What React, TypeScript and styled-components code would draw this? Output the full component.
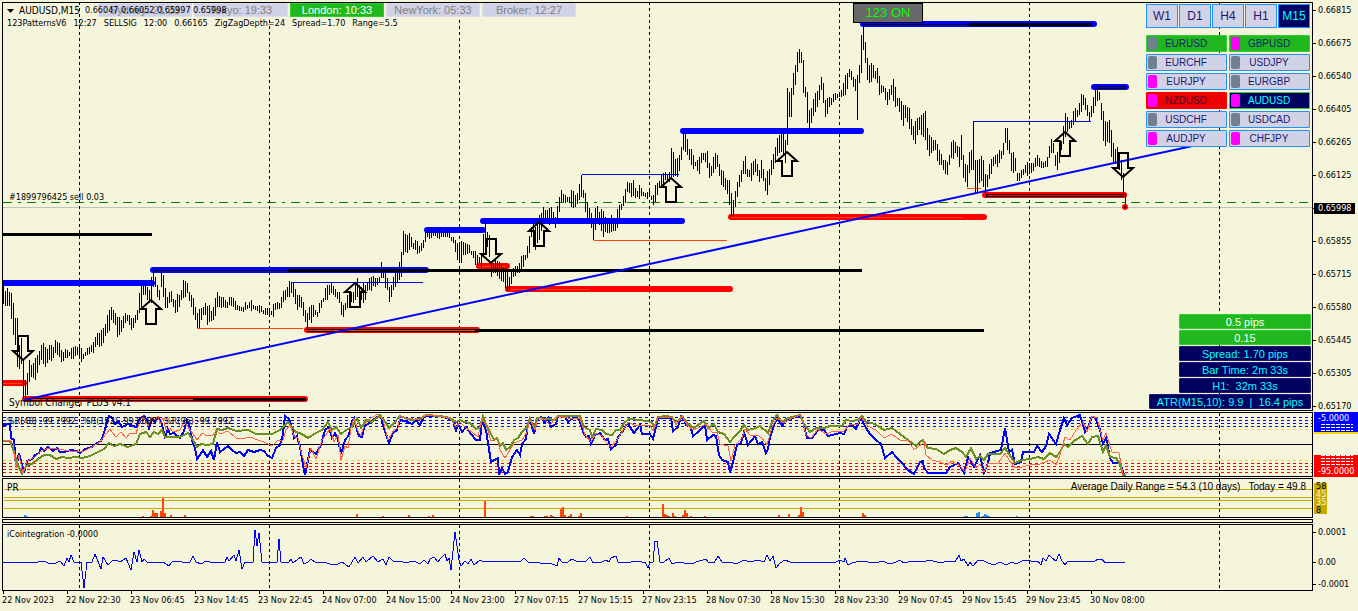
import React from "react";
import styled, { createGlobalStyle } from "styled-components";

const BEIGE = "#f5f5dc";
const UI = '"DejaVu Sans Condensed", "DejaVu Sans", sans-serif';
const ARIAL = '"Liberation Sans", Arial, sans-serif';

const Global = createGlobalStyle`
  * { box-sizing: border-box; }
  body { margin: 0; background: ${BEIGE}; color: #000; font: 10px/13px ${UI}; }
`;

const Page = styled.main`
  display: flex;
  flex-direction: column;
  gap: 1px;
  padding: 2px 0 0 2px;
  overflow: hidden;
`;
const Panel = styled.section`
  display: grid;
  grid-template-columns: minmax(0, 1fr) 45px;
`;
const Plot = styled.div<{ $h: number }>`
  display: grid;
  grid-template: minmax(0, 1fr) / minmax(0, 1fr);
  height: ${(p) => p.$h}px;
  border: 1px solid #000;
  > * { grid-area: 1 / 1; }
`;
const Divider = styled.div`
  height: 4px;
  margin-right: 45px;
  border: 1px solid #000;
`;
const Canvas = styled.svg`
  display: block;
  width: 100%;
  height: 100%;
  overflow: hidden;
`;
const Note = styled.span<{ $x?: number; $y?: number; $arial?: boolean; $end?: boolean }>`
  z-index: 1;
  align-self: start;
  justify-self: ${(p) => (p.$end ? "end" : "start")};
  margin: ${(p) => p.$y ?? 0}px ${(p) => (p.$end ? 6 : 0)}px 0 ${(p) => p.$x ?? 4}px;
  white-space: pre;
  font-family: ${(p) => (p.$arial ? ARIAL : UI)};
`;
const Title = styled(Note)`
  display: flex;
  align-items: center;
  gap: 5px;
`;
const Values = styled(Note)`
  display: flex;
  gap: 7px;
  font-size: 9px;
`;
const Small = styled.span`
  font-size: 9px;
`;

const Sessions = styled.div`
  display: flex;
  gap: 2px;
  align-self: start;
  margin-left: 95px;
`;
const Session = styled.div<{ $open?: boolean }>`
  width: 94px;
  height: 14px;
  border: 1px solid ${(p) => (p.$open ? "#32cd32" : "#dcdcee")};
  background: ${(p) => (p.$open ? "#1fb91f" : "#d2d2e6")};
  color: ${(p) => (p.$open ? "#fff" : "#808080")};
  font: 11px/12px ${ARIAL};
  text-align: center;
`;
const Toggle = styled.button`
  align-self: start;
  width: 70px;
  height: 20px;
  margin-left: 850px;
  padding: 0;
  border: 1px solid #000;
  background: #696969;
  color: #0f0;
  font: 13px/18px ${ARIAL};
`;

const Controls = styled.div`
  display: flex;
  flex-direction: column;
  gap: 7px;
  align-self: start;
  justify-self: end;
  margin: 1px 2px 0 0;
`;
const Frames = styled.div`
  display: grid;
  grid-template-columns: repeat(5, 32px);
  gap: 1px;
`;
const FrameButton = styled.button<{ $on?: boolean }>`
  height: 24px;
  padding: 0;
  border: 1px solid #1e90ff;
  background: ${(p) => (p.$on ? "#000060" : "#d2d2e6")};
  color: ${(p) => (p.$on ? "#0ff" : "#191970")};
  font: 12px/22px ${ARIAL};
`;
const Symbols = styled.div`
  display: grid;
  grid-template-columns: 81px 81px;
  gap: 2px;
`;
type Tone = "plain" | "up" | "down" | "on";
const tones: Record<Tone, [string, string, string]> = {
  plain: ["#d2d2e6", "#1e90ff", "#191970"],
  up: ["#1fb91f", "#32cd32", "#191970"],
  down: ["#ee0000", "#ff0000", "#4a0a30"],
  on: ["#000060", "#32cd32", "#0ff"],
};
const SymbolButton = styled.button<{ $tone: Tone }>`
  display: grid;
  grid-template-columns: 9px 1fr 10px;
  align-items: center;
  height: 17px;
  padding: 0 1px;
  border: 1px solid ${(p) => tones[p.$tone][1]};
  border-radius: 1px;
  background: ${(p) => tones[p.$tone][0]};
  color: ${(p) => tones[p.$tone][2]};
  font: 10px/15px ${ARIAL};
  text-align: center;
`;
const Chip = styled.i<{ $hot: boolean }>`
  height: 13px;
  border-radius: 2px;
  background: ${(p) => (p.$hot ? "#f0f" : "#708090")};
`;

const Readouts = styled.div`
  display: flex;
  flex-direction: column;
  align-items: flex-end;
  gap: 1px;
  align-self: end;
  justify-self: end;
  margin: 0 1px 1px 0;
`;
const Readout = styled.div<{ $good?: boolean; $wide?: boolean }>`
  width: ${(p) => (p.$wide ? 162 : 132)}px;
  height: 15px;
  border: 1px solid ${(p) => (p.$good ? "#32cd32" : "#191970")};
  border-radius: 1px;
  background: ${(p) => (p.$good ? "#1fb91f" : "#000060")};
  color: ${(p) => (p.$good ? "#fff" : "#0ff")};
  font: 11px/14px ${ARIAL};
  text-align: center;
  white-space: pre;
`;

const PriceAxis = styled.div`
  display: flex;
  flex-direction: column;
  gap: 20px;
  height: 409px;
  padding-top: 2px;
`;
const Price = styled.div<{ $now?: boolean }>`
  display: flex;
  align-items: center;
  flex: none;
  height: 13px;
  font-size: 9px;
  &::before { content: ""; width: ${(p) => (p.$now ? 1 : 3)}px; height: 1px; background: #000; }
  span {
    padding: 0 ${(p) => (p.$now ? 4 : 2)}px;
    line-height: 11px;
    background: ${(p) => (p.$now ? "#000" : "none")};
    color: ${(p) => (p.$now ? "#fff" : "#000")};
  }
`;
const SplitAxis = styled.div`
  display: flex;
  flex-direction: column;
  justify-content: space-between;
`;
const CointAxis = styled.div`
  display: grid;
  grid-template-rows: 30px 22px 13px;
  align-items: start;
  padding-top: 2px;
`;
const LevelStack = styled.div<{ $tone: string; $edge: "top" | "bottom" }>`
  display: flex;
  flex-direction: ${(p) => (p.$edge === "top" ? "column" : "column-reverse")};
  height: 22px;
  margin-left: 1px;
  padding-left: 4px;
  background: ${(p) => p.$tone};
  color: #fff;
  font-size: 9px;
  line-height: 12px;
  border-bottom: ${(p) => (p.$edge === "top" ? "2px solid #ffd700" : "none")};
`;
const Hatch = styled.div<{ $tone: string }>`
  flex: 1;
  margin: 0 5px 0 3px;
  background:
    repeating-linear-gradient(90deg, transparent 0 4px, ${(p) => p.$tone} 4px 5px),
    repeating-linear-gradient(180deg, #fff 0 1px, transparent 1px 3px);
`;
const LevelBox = styled.div`
  display: flex;
  flex-direction: column;
  justify-content: space-between;
  align-self: flex-start;
  width: 13px;
  height: 31px;
  margin: 5px 0 0 1px;
  padding-left: 2px;
  background: #c8aa00;
  color: ${BEIGE};
  font-size: 9px;
  line-height: 7px;
  b { font-weight: 400; color: #000; }
`;

const TimeAxis = styled.div`
  display: flex;
  height: 20px;
  margin-top: -1px;
`;
const Time = styled.time`
  flex: none;
  width: 64px;
  font-size: 9px;
  line-height: 13px;
  white-space: nowrap;
  &::before { content: ""; display: block; width: 1px; height: 3px; margin-left: 1px; background: #000; }
`;

const DAYS = [79, 269, 459, 649, 839, 1029, 1219];

/* x, high, low of the price bars; the bars between two entries follow the line that joins them */
const BARS =
  "3,282,304 5,291,306 7,288,306 10,288,307 12,297,331 14,314,333 15,318,345 17,318,367 18,350,371 20,340,366 21,338,364 23,360,398 25,380,398 27,373,395 29,360,382 33,363,378 37,355,373 41,345,360 45,347,367 49,345,360 53,347,358 55,340,353 59,343,357 61,350,362 65,349,358 70,350,357 74,347,357 78,344,353 80,350,363 82,352,361 87,348,355 91,345,352 95,337,347 99,333,347 103,328,343 107,315,333 111,307,320 115,313,325 117,317,337 121,320,332 125,313,323 129,315,325 133,318,328 137,310,320 139,293,313 142,280,303 144,279,293 147,287,300 149,290,303 151,277,303 153,271,287 155,277,287 157,285,297 159,290,300 161,272,287 163,275,297 165,288,308 167,297,308 169,292,303 171,291,302 175,300,313 179,295,307 183,280,298 187,283,293 191,295,307 195,307,320 197,313,328 201,308,320 205,303,315 207,306,325 213,307,320 217,292,307 221,297,308 225,300,308 229,297,305 233,298,307 237,305,310 243,307,312 249,302,308 255,306,310 261,306,312 267,308,315 270,310,319 275,303,310 280,300,307 285,290,300 290,282,293 293,283,297 297,295,310 301,297,308 305,310,322 307,313,330 309,307,320 313,305,317 317,312,317 321,300,308 325,288,300 329,285,295 331,283,293 335,289,297 339,292,303 341,302,315 343,305,317 347,295,308 353,292,303 357,278,297 361,287,300 365,285,300 369,278,290 375,278,287 379,277,283 381,262,278 383,267,278 387,278,290 389,287,302 393,277,290 397,272,283 401,252,277 403,231,255 407,235,253 411,237,247 415,240,250 419,246,253 423,240,248 425,232,242 427,230,237 435,231,236 449,233,238 453,237,243 457,243,260 460,242,263 465,243,255 469,245,253 473,251,258 477,255,265 480,256,267 482,250,263 484,222,247 486,225,243 489,235,257 491,262,277 495,260,273 499,262,279 503,267,282 506,273,290 509,277,290 513,268,277 519,263,273 523,255,267 528,247,253 530,227,250 532,222,232 535,227,250 539,215,240 543,207,220 547,210,223 551,207,220 555,217,228 559,197,212 561,190,202 565,195,203 569,197,203 571,190,207 575,195,207 579,184,200 581,175,197 583,190,198 585,193,212 588,208,220 592,213,233 593,220,240 596,207,223 600,208,228 604,215,236 608,218,233 612,218,233 616,215,230 620,203,217 624,193,202 628,180,193 632,183,195 636,188,200 640,188,195 645,193,197 650,192,198 653,195,205 657,183,195 661,175,185 665,172,180 669,172,182 671,148,177 673,152,177 676,162,175 680,153,170 683,131,150 686,137,153 690,148,163 694,160,168 698,160,172 702,153,162 706,150,161 709,163,178 712,163,178 714,153,165 717,155,167 721,170,185 725,178,190 728,178,197 731,193,216 733,200,216 737,182,197 741,170,182 744,157,170 748,170,180 752,163,177 756,158,170 759,170,182 762,158,177 765,178,191 768,172,193 771,160,175 775,147,163 778,133,152 782,130,150 785,140,163 787,88,145 789,92,117 791,88,117 793,73,95 795,65,85 797,52,72 799,49,63 801,52,63 803,60,93 805,87,97 807,92,123 809,110,131 811,108,123 815,93,112 819,85,100 821,77,90 823,83,103 825,100,117 829,97,107 835,93,100 841,90,97 845,75,95 849,69,77 853,77,87 855,79,91 857,75,120 859,65,83 861,35,73 863,24,50 865,42,63 867,58,80 869,65,83 873,65,78 877,68,83 880,83,97 884,85,93 887,92,105 891,85,95 893,79,101 896,93,108 900,100,113 903,105,126 906,102,115 910,115,133 914,125,145 917,118,135 920,115,133 925,111,140 928,132,157 931,137,153 935,140,150 939,150,165 943,160,170 947,162,175 951,142,158 955,142,153 959,147,167 961,135,160 963,155,178 967,165,187 969,152,173 971,150,170 973,122,170 975,160,193 978,163,193 980,153,177 982,153,182 984,172,190 986,177,195 988,167,182 992,158,167 996,153,164 1000,153,163 1003,143,155 1005,128,143 1008,130,152 1011,153,171 1014,153,170 1017,173,181 1021,170,178 1025,165,173 1031,163,173 1035,158,167 1039,158,167 1043,162,168 1047,157,167 1050,140,153 1053,143,153 1056,157,172 1059,147,163 1062,133,147 1065,113,137 1068,120,132 1071,120,128 1075,108,121 1079,103,115 1082,92,107 1085,98,110 1089,112,122 1093,97,113 1096,88,101 1099,92,100 1101,103,120 1104,117,147 1106,127,150 1108,113,133 1111,130,157 1114,147,167 1117,147,160 1121,160,180 1123,173,195 1125,193,207";

const wave = (i: number) => Math.round(2.4 * Math.sin(i * 2.3) + 1.4 * Math.sin(i * 5.1));

function barsPath(): string {
  const keys = BARS.split(" ").map((s) => s.split(",").map(Number));
  const out: string[] = [];
  let k = 0;
  for (let x = 3; x <= 1125; x += 2) {
    while (k < keys.length - 2 && keys[k + 1][0] <= x) k++;
    const [a, b] = [keys[k], keys[k + 1]];
    const t = (x - a[0]) / (b[0] - a[0]);
    const off = t === 0 || t === 1 ? 0 : wave(x);
    const hi = Math.round(a[1] + (b[1] - a[1]) * t) + off;
    const lo = Math.round(a[2] + (b[2] - a[2]) * t) + (off ? wave(x + 1) : 0);
    out.push(`M${x + 0.5} ${hi}V${Math.max(lo, hi + 4)}`);
  }
  return out.join("");
}

const R_FAST =
  "3,425 10,424 11,438 14,440 16,468 19,453 22,465 24,473 27,461 32,459 35,455 39,453 41,448 44,451 48,447 53,451 57,448 60,452 65,452 70,450 77,451 80,453 85,449 92,447 97,443 101,441 105,430 107,420 109,416 112,418 115,424 118,421 122,427 128,424 136,427 140,418 144,416 147,420 149,428 152,419 155,422 158,417 161,421 165,437 168,429 170,434 174,433 180,438 184,431 187,420 190,428 193,444 195,448 197,459 200,455 203,450 207,457 211,451 214,460 217,442 220,452 224,449 228,446 232,450 236,453 240,452 244,456 248,450 254,452 260,450 264,451 268,456 272,458 276,448 280,445 283,434 285,416 289,419 292,427 294,438 297,436 300,447 303,465 305,475 308,460 310,450 316,454 321,445 325,430 329,427 332,438 335,433 338,440 341,454 345,440 349,435 351,424 354,418 357,430 359,436 362,437 364,427 370,422 377,417 381,417 384,428 389,443 393,433 397,430 400,420 405,421 412,424 416,420 420,425 424,416 440,416 450,419 453,421 456,430 458,424 462,432 466,427 471,434 476,440 480,440 482,420 486,430 491,462 498,458 499,475 502,468 505,474 508,472 512,457 517,450 520,455 522,444 526,439 528,425 530,419 534,434 537,420 541,417 545,423 548,418 551,427 556,424 558,416 565,417 568,422 573,418 577,418 580,421 583,432 586,437 589,436 591,444 595,435 600,433 605,440 608,439 611,449 616,445 618,437 623,431 626,425 628,424 634,433 640,425 642,434 650,434 653,439 656,427 658,418 671,418 673,431 678,427 681,417 684,420 686,425 690,425 693,436 698,432 705,425 707,440 713,435 716,436 719,455 722,460 728,462 730,473 733,462 737,445 741,443 744,432 748,445 755,436 758,444 762,442 766,453 768,449 770,437 774,425 777,418 782,426 786,420 790,420 794,417 800,417 803,421 807,438 812,438 818,430 824,430 828,436 840,433 844,434 847,427 852,425 856,429 861,418 866,428 870,434 876,440 881,444 885,458 892,452 896,457 901,462 908,470 914,474 920,462 923,461 924,468 928,473 946,473 950,467 958,463 964,473 968,457 974,467 980,455 984,473 988,463 990,453 1001,450 1005,428 1009,452 1012,450 1015,464 1021,462 1023,452 1034,452 1037,446 1042,452 1046,446 1049,434 1056,444 1060,430 1064,418 1067,425 1072,418 1080,415 1085,432 1089,425 1092,417 1096,418 1100,430 1103,444 1106,438 1110,458 1113,463 1120,463 1124,475";
const R_SLOW =
  "3,441 10,441 14,452 18,465 22,474 26,466 32,464 38,459 44,455 50,455 56,459 62,457 68,458 76,457 82,458 90,456 96,453 104,449 109,443 114,446 120,444 128,447 136,444 140,434 146,432 150,437 154,432 158,434 162,430 165,437 172,437 180,437 188,433 193,440 197,447 201,444 207,445 213,444 217,429 222,430 228,428 236,431 248,430 256,434 264,434 272,434 280,430 284,426 288,422 292,427 296,432 302,434 308,438 316,433 322,430 328,422 332,430 336,427 341,434 346,430 352,427 357,418 361,428 366,420 372,422 380,415 384,420 389,428 394,423 400,416 410,420 420,419 426,415 440,416 450,418 456,422 460,420 464,422 470,423 476,429 480,427 483,416 486,424 490,432 494,440 497,438 500,446 503,443 506,450 510,447 514,440 518,438 522,432 527,427 530,418 534,428 537,418 548,419 555,420 558,416 580,416 584,427 590,430 592,437 596,429 602,430 606,434 612,435 616,430 620,430 624,423 629,419 640,420 652,422 654,428 658,417 666,416 672,417 675,422 679,420 682,416 688,424 694,428 698,425 704,421 708,428 714,424 718,432 724,434 730,442 734,437 740,431 744,425 748,430 756,428 760,426 768,433 772,422 777,415 782,422 788,418 800,415 804,424 810,432 816,428 824,428 830,426 842,426 846,420 852,421 858,420 862,416 866,422 872,423 878,426 884,430 892,428 900,434 908,440 916,446 920,442 923,440 928,448 936,449 944,454 950,450 956,448 962,452 966,457 971,448 976,459 980,456 984,460 988,454 1000,454 1005,448 1009,454 1015,463 1022,460 1030,459 1038,457 1044,459 1050,453 1056,457 1060,452 1064,444 1068,447 1074,441 1082,436 1088,444 1092,437 1098,436 1103,452 1106,445 1110,457 1116,458 1120,464 1123,475 1126,475";
const R_MID =
  "3,441 10,440 13,444 16,468 19,455 23,473 27,461 35,457 40,452 48,448 57,449 70,451 82,452 92,447 100,442 106,434 110,429 116,437 121,432 126,438 130,433 136,434 140,420 144,417 148,426 152,417 155,420 158,416 160,424 163,418 166,430 170,428 173,432 180,430 184,421 188,427 193,434 197,440 202,433 207,436 213,435 216,430 220,434 228,431 236,438 242,439 250,437 258,440 264,442 268,444 272,446 278,440 283,440 286,430 290,425 294,436 298,438 302,455 306,468 311,448 316,459 322,440 326,435 330,428 334,442 338,435 341,460 345,446 348,448 351,428 354,418 358,431 361,436 364,425 368,420 378,414 383,420 388,440 394,430 398,428 400,416 406,418 420,420 424,415 440,416 450,418 456,427 460,422 466,428 472,432 478,437 482,418 487,428 491,441 497,438 500,450 505,458 510,450 514,443 522,440 527,432 530,419 535,430 538,418 545,420 550,425 557,416 568,418 580,418 585,435 591,442 596,433 602,436 606,442 611,447 617,440 622,432 628,422 634,425 642,425 650,425 653,431 657,418 672,417 676,425 682,416 687,425 693,430 700,427 706,424 712,432 717,432 720,444 728,446 731,461 735,445 742,438 745,429 750,435 757,435 762,438 767,445 772,427 777,418 784,423 792,418 801,415 806,435 811,438 818,429 826,434 834,431 844,431 850,424 858,424 861,417 868,426 876,430 884,438 892,434 900,440 908,440 914,450 922,444 924,442 926,455 932,460 940,462 946,465 952,461 960,466 965,472 970,458 976,468 980,464 984,472 988,463 998,463 1005,453 1009,460 1015,468 1022,467 1030,465 1040,464 1050,460 1056,465 1060,455 1065,437 1070,440 1076,430 1083,422 1087,432 1092,416 1097,418 1100,430 1103,440 1106,433 1112,452 1119,453 1123,475";
const COINT =
  "3,562 38,562 44,561 48,563 56,563 60,561 64,566 67,558 69,562 71,555 74,562 81,562 84,588 87,562 92,562 95,554 101,569 103,557 108,565 112,561 116,560 120,562 126,558 131,570 134,552 137,562 139,550 142,562 144,559 148,563 156,562 163,562 169,566 172,562 180,561 184,563 190,562 193,556 196,562 201,564 206,561 214,563 225,562 227,557 229,561 234,555 236,561 239,550 242,569 245,562 253,562 255,530 257,546 259,533 262,562 277,562 279,539 281,562 289,562 291,559 293,563 301,557 304,564 308,562 311,559 315,562 324,562 330,564 336,565 342,562 349,567 355,557 358,563 363,557 366,562 373,556 378,562 383,559 386,565 389,557 394,562 400,561 406,563 412,561 416,562 420,564 424,560 428,564 430,559 434,557 438,562 441,558 445,554 447,561 449,558 451,570 455,532 459,560 461,566 465,561 468,564 471,559 474,565 480,560 484,562 490,561 496,562 502,561 520,562 524,558 528,562 540,563 550,563 557,566 559,558 562,562 568,562 572,559 578,562 586,561 590,557 593,563 602,562 606,560 609,562 611,558 616,556 618,562 626,563 636,561 642,562 645,562 648,568 650,562 653,562 655,541 657,541 660,562 664,562 669,558 672,564 678,562 684,563 692,564 696,562 706,559 708,562 714,563 718,556 722,562 730,562 736,564 744,560 750,562 758,560 764,562 767,555 770,561 773,556 776,568 780,563 785,560 790,562 836,562 840,560 844,562 845,558 848,565 852,563 860,561 868,562 876,563 882,561 890,564 896,562 900,560 904,563 912,561 922,562 930,560 940,563 948,561 955,562 959,555 961,561 964,559 968,566 970,562 973,566 978,560 984,561 988,563 994,565 1000,562 1006,565 1012,562 1016,564 1022,561 1028,560 1034,562 1038,561 1041,565 1043,558 1046,561 1049,555 1052,558 1056,561 1059,554 1062,561 1065,565 1068,561 1076,562 1086,561 1094,562 1098,559 1102,559 1105,563 1110,562 1125,562";

const PR_UP: [number, number][] = [
  [142, 1], [150, 1], [152, 7], [154, 4], [156, 4], [160, 6], [162, 19], [164, 4], [170, 2], [184, 2], [356, 3], [382, 1],
  [408, 2], [428, 1], [432, 2], [484, 16], [530, 1], [532, 1], [544, 1], [546, 1], [550, 2], [552, 1], [560, 8], [562, 10],
  [564, 2], [568, 1], [570, 3], [578, 1], [580, 4], [626, 1], [662, 13], [664, 3], [666, 2], [668, 1], [672, 4], [674, 1],
  [682, 2], [684, 7], [686, 4], [690, 1], [704, 1], [778, 2], [788, 3], [798, 2], [800, 10], [802, 5], [862, 4], [864, 2],
];
const PR_DOWN: [number, number][] = [
  [24, 2], [26, 1], [964, 1], [966, 1], [976, 4], [978, 5], [982, 1], [984, 3], [986, 2], [988, 1], [1016, 1],
];

type Band = { x: number; to: number; y: number; c: string };
const BANDS: Band[] = [
  { x: 0, to: 152, y: 283, c: "#00f" },
  { x: 153, to: 426, y: 270, c: "#00f" },
  { x: 427, to: 483, y: 230, c: "#00f" },
  { x: 483, to: 682, y: 221, c: "#00f" },
  { x: 683, to: 861, y: 131, c: "#00f" },
  { x: 863, to: 1094, y: 24, c: "#00f" },
  { x: 1094, to: 1126, y: 87, c: "#00f" },
  { x: 0, to: 24, y: 383, c: "#f00" },
  { x: 25, to: 305, y: 399, c: "#f00" },
  { x: 307, to: 477, y: 330, c: "#f00" },
  { x: 479, to: 507, y: 266, c: "#f00" },
  { x: 508, to: 730, y: 289, c: "#f00" },
  { x: 731, to: 984, y: 217, c: "#f00" },
  { x: 985, to: 1124, y: 195, c: "#f00" },
];
const BLACK_LINES: [number, number, number, number][] = [
  [2, 152, 234, 3], [288, 862, 270, 3], [153, 288, 270, 1], [863, 969, 24, 1], [969, 1092, 24, 3],
  [1096, 1126, 87, 3], [193, 306, 399, 3], [25, 193, 399, 3], [307, 478, 330, 3], [478, 984, 330, 3], [986, 1124, 195, 3],
];
const THIN: [number, number, number, string][] = [
  [291, 423, 282, "#00f"], [582, 679, 174, "#00f"], [973, 1091, 121, "#00f"], [1096, 1125, 87, "#00f"],
  [197, 303, 328, "#ff4500"], [594, 727, 240, "#ff4500"], [967, 981, 188, "#ff4500"], [2, 22, 383, "#ff4500"],
  [25, 193, 399, "#ff4500"], [307, 475, 330, "#ff4500"], [479, 505, 266, "#ff4500"], [508, 589, 289, "#ff4500"],
  [731, 963, 217, "#ff4500"], [987, 1123, 195, "#f00"],
];
const UP_ARROWS = [[151, 299], [355, 282], [539, 221], [671, 177], [787, 151], [1065, 131]];
const DOWN_ARROWS = [[23, 361], [491, 264], [1123, 178]];

function DayLines({ from, to }: { from: number; to: number }) {
  return (
    <path
      d={DAYS.map((x) => `M${x + 0.5} ${from}V${to}`).join("")}
      stroke="#000"
      strokeDasharray="3 3"
      shapeRendering="crispEdges"
    />
  );
}

function PriceChart() {
  return (
    <Canvas aria-label="AUDUSD M15 price">
      <g transform="translate(-3 -3)" fill="none">
        <g shapeRendering="crispEdges">
          <line x1="0" x2="120%" y1="207.5" y2="207.5" stroke="#c0c0c0" />
          <line x1="3" x2="120%" y1="202.5" y2="202.5" stroke="#008000" strokeDasharray="9 6 3 6" />
        </g>
        <DayLines from={2} to={412} />
        {BANDS.map((b, i) => (
          <line key={i} x1={b.x} x2={b.to} y1={b.y} y2={b.y} stroke={b.c} strokeWidth="6" strokeLinecap="round" />
        ))}
        <g shapeRendering="crispEdges">
          {BLACK_LINES.map(([a, b, y, w], i) => (
            <line key={i} x1={a} x2={b} y1={y + 0.5} y2={y + 0.5} stroke="#000" strokeWidth={w} />
          ))}
          {THIN.map(([a, b, y, c], i) => (
            <line key={i} x1={a} x2={b} y1={y + 0.5} y2={y + 0.5} stroke={c} />
          ))}
          <path d={barsPath()} stroke="#000" />
        </g>
        <path d="M24 400L1197 145" stroke="#00f" strokeWidth="2" />
        <circle cx="1125" cy="207" r="3" fill="#f00" />
        <circle cx="1125" cy="207" r="1" fill="#000" />
        {UP_ARROWS.map(([x, y]) => (
          <path key={x} d={`M${x} ${y + 1}l10 9h-5v15h-10v-15h-5z`} stroke="#000" strokeWidth="2" />
        ))}
        {DOWN_ARROWS.map(([x, y]) => (
          <path key={x} d={`M${x} ${y - 1}l10 -9h-5v-15h-10v15h-5z`} stroke="#000" strokeWidth="2" />
        ))}
      </g>
    </Canvas>
  );
}

const R_LEVELS: [number, string][] = [
  [417, "#00f"], [420, "#00f"], [423, "#00f"], [426, "#00f"], [429, "#ffd700"],
  [460, "#ffd700"], [463, "#f00"], [466, "#f00"], [469, "#f00"], [472, "#f00"],
];

function RangeChart() {
  return (
    <Canvas aria-label="Williams percent range">
      <g transform="translate(-3 -413)" fill="none" shapeRendering="crispEdges">
        {R_LEVELS.map(([y, c]) => (
          <line key={y} x1="3" x2="120%" y1={y + 0.5} y2={y + 0.5} stroke={c} strokeDasharray="3 3" />
        ))}
        <line x1="0" x2="120%" y1="444.5" y2="444.5" stroke="#000" />
        <DayLines from={413} to={477} />
        <polyline points={R_FAST} stroke="#00f" strokeWidth="2" />
        <polyline points={R_SLOW} stroke="#6b8e23" strokeWidth="2" />
        <polyline points={R_MID} stroke="#ff6347" />
      </g>
    </Canvas>
  );
}

function PowerChart() {
  return (
    <Canvas aria-label="PR histogram">
      <g transform="translate(-3 -479)" shapeRendering="crispEdges">
        <DayLines from={479} to={518} />
        {[489, 497, 500, 508].map((y) => (
          <line key={y} x1="4" x2="120%" y1={y + 0.5} y2={y + 0.5} stroke="#c8aa00" />
        ))}
        {PR_UP.map(([x, h]) => (
          <rect key={x} x={x} y={517 - h} width="2" height={h} fill="#ff4500" />
        ))}
        {PR_DOWN.map(([x, h]) => (
          <rect key={x} x={x} y={517 - h} width="2" height={h} fill="#1e90ff" />
        ))}
      </g>
    </Canvas>
  );
}

function CointegrationChart() {
  return (
    <Canvas aria-label="Cointegration">
      <g transform="translate(-3 -525)" fill="none" shapeRendering="crispEdges">
        <DayLines from={525} to={588} />
        <polyline points={COINT} stroke="#00f" />
      </g>
    </Canvas>
  );
}

const SESSIONS: [string, boolean][] = [
  ["Sydney: 21:33", false], ["Tokyo: 19:33", false], ["London: 10:33", true], ["NewYork: 05:33", false], ["Broker: 12:27", false],
];
const SIGNAL = [
  "123PatternsV6", "12:27", "SELLSIG", "12:00", "0.66165", "ZigZagDepth=24", "Spread=1.70", "Range=5.5",
];
const RANGES = ["%R(48) -99.7992", "%R(192) -99.8689", "%R(96) -99.7992"];
const SYMBOLS: [string, Tone, boolean][] = [
  ["EURUSD", "up", false], ["GBPUSD", "up", true], ["EURCHF", "plain", false], ["USDJPY", "plain", false],
  ["EURJPY", "plain", true], ["EURGBP", "plain", false], ["NZDUSD", "down", true], ["AUDUSD", "on", true],
  ["USDCHF", "plain", false], ["USDCAD", "plain", false], ["AUDJPY", "plain", true], ["CHFJPY", "plain", true],
];
const PRICES = [
  "0.66815", "0.66675", "0.66540", "0.66405", "0.66265", "0.66125", "0.65998",
  "0.65855", "0.65715", "0.65580", "0.65445", "0.65305", "0.65170",
];
const TIMES = [
  "22 Nov 2023", "22 Nov 22:30", "23 Nov 06:45", "23 Nov 14:45", "23 Nov 22:45", "24 Nov 07:00",
  "24 Nov 15:00", "24 Nov 23:00", "27 Nov 07:15", "27 Nov 15:15", "27 Nov 23:15", "28 Nov 07:30",
  "28 Nov 15:30", "28 Nov 23:30", "29 Nov 07:45", "29 Nov 15:45", "29 Nov 23:45", "30 Nov 08:00",
];

export default function App() {
  return (
    <Page>
      <Global />
      <Panel>
        <Plot $h={409}>
          <PriceChart />
          <Sessions>
            {SESSIONS.map(([label, open]) => (
              <Session key={label} $open={open}>{label}</Session>
            ))}
          </Sessions>
          <Title $y={1}>
            <svg width="7" height="4" aria-hidden="true">
              <path d="M0 0h7L3.5 4z" />
            </svg>
            <span>AUDUSD,M15</span>
            <Small>0.66047 0.66052 0.65997 0.65998</Small>
          </Title>
          <Values $y={14}>
            {SIGNAL.map((s) => (
              <span key={s}>{s}</span>
            ))}
          </Values>
          <Note $x={6} $y={187}><Small>#1899796425 sell 0.03</Small></Note>
          <Note $x={6} $y={393}>Symbol Changer PLUS v4.1</Note>
          <Toggle type="button">123 ON</Toggle>
          <Controls>
            <Frames>
              {["W1", "D1", "H4", "H1", "M15"].map((f) => (
                <FrameButton key={f} type="button" $on={f === "M15"}>{f}</FrameButton>
              ))}
            </Frames>
            <Symbols>
              {SYMBOLS.map(([name, tone, hot]) => (
                <SymbolButton key={name} type="button" $tone={tone}>
                  <Chip $hot={hot} />
                  {name}
                </SymbolButton>
              ))}
            </Symbols>
          </Controls>
          <Readouts>
            <Readout $good>0.5 pips</Readout>
            <Readout $good>0.15</Readout>
            <Readout>Spread: 1.70 pips</Readout>
            <Readout>Bar Time: 2m 33s</Readout>
            <Readout>H1:  32m 33s</Readout>
            <Readout $wide>ATR(M15,10): 9.9  |  16.4 pips</Readout>
          </Readouts>
        </Plot>
        <PriceAxis>
          {PRICES.map((p) => (
            <Price key={p} $now={p === "0.65998"}><span>{p}</span></Price>
          ))}
        </PriceAxis>
      </Panel>
      <Panel>
        <Plot $h={65}>
          <RangeChart />
          <Values $y={2}>
            {RANGES.map((s) => (
              <span key={s}>{s}</span>
            ))}
          </Values>
        </Plot>
        <SplitAxis>
          <LevelStack $tone="#00f" $edge="top">
            -5.0000
            <Hatch $tone="#00f" />
          </LevelStack>
          <LevelStack $tone="#f00" $edge="bottom">
            -95.0000
            <Hatch $tone="#f00" />
          </LevelStack>
        </SplitAxis>
      </Panel>
      <Panel>
        <Plot $h={40}>
          <PowerChart />
          <Note $y={2}>PR</Note>
          <Note $y={1} $arial $end>Average Daily Range = 54.3 (10 days)   Today = 49.8</Note>
        </Plot>
        <LevelBox>
          <b>58</b>
          <span>45</span>
          <span>35</span>
          <b>8</b>
        </LevelBox>
      </Panel>
      <Divider />
      <Panel>
        <Plot $h={67}>
          <CointegrationChart />
          <Note $y={2}><Small>iCointegration -0.0000</Small></Note>
        </Plot>
        <CointAxis>
          <Price><span>0.0001</span></Price>
          <Price><span>0.00</span></Price>
          <Price><span>-0.0001</span></Price>
        </CointAxis>
      </Panel>
      <TimeAxis>
        {TIMES.map((t) => (
          <Time key={t}>{t}</Time>
        ))}
      </TimeAxis>
    </Page>
  );
}
